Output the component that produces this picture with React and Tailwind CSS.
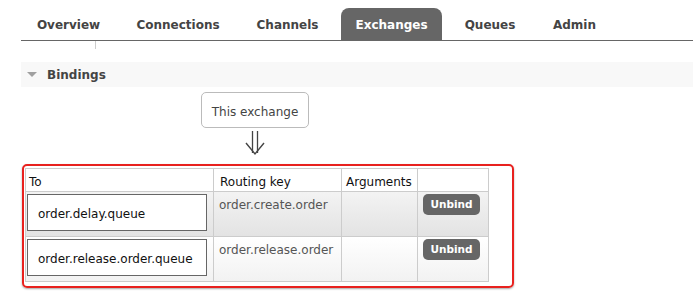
export default function App() {
  const font = { fontFamily: '"DejaVu Sans", Verdana, sans-serif' };
  const tabs = [
    { label: "Overview", w: "w-[91px]" },
    { label: "Connections", w: "w-[112px]" },
    { label: "Channels", w: "w-[91px]" },
    { label: "Exchanges", w: "w-[101px]", active: true },
    { label: "Queues", w: "w-[80px]" },
    { label: "Admin", w: "w-[73px]" },
  ];
  const rows = [
    { q: "order.delay.queue", k: "order.create.order", bg: "bg-gradient-to-b from-[#f3f3f3] to-[#e3e3e3]" },
    { q: "order.release.order.queue", k: "order.release.order", bg: "bg-gradient-to-b from-[#ffffff] to-[#f2f2f2]" },
  ];
  return (
    <div className="w-[693px] h-[303px] bg-white overflow-hidden" style={font}>
      <div className="pt-[8px] ml-[21px]">
        <div className="flex gap-[8px] pl-[2px] border-b border-[#666] h-[33px]">
          {tabs.map((t) => (
            <div
              key={t.label}
              className={`${t.w} h-[32px] pt-[2px] flex items-center justify-center text-[12px] font-bold ${
                t.active ? "bg-[#666] text-white rounded-t-[8px]" : "text-[#444]"
              }`}
            >
              {t.label}
            </div>
          ))}
        </div>
        <div className="ml-[74px] w-px h-[8px] bg-[#ccc]" />
        <div className="mt-[13px] h-[25px] bg-[#f8f8f8] flex items-center">
          <svg width="10" height="5" viewBox="0 0 10 5" className="ml-[6px]">
            <polygon points="0,0 10,0 5,5" fill="#a0a0a0" />
          </svg>
          <span className="ml-[10px] text-[12px] font-bold text-[#444]">Bindings</span>
        </div>
        <div className="ml-[180px] mt-[5px] w-[108px] h-[36px] pt-[3px] border border-[#bbb] rounded-[5px] flex items-center justify-center text-[12px] text-[#444]">
          This exchange
        </div>
        <svg width="22" height="26" viewBox="0 0 22 26" className="ml-[224px] mt-[3px]">
          <line x1="7.5" y1="0" x2="7.5" y2="22" stroke="#444" strokeWidth="1.3" />
          <line x1="12.5" y1="0" x2="12.5" y2="22" stroke="#444" strokeWidth="1.3" />
          <polyline points="1,12 10,23 19,12" fill="none" stroke="#444" strokeWidth="1.4" />
        </svg>
        <div className="ml-[1px] mt-[7px] w-[492px] h-[124px] border-2 border-[#e8211e] rounded-[5px] shadow-[0_1px_2px_rgba(0,0,0,0.35)] pl-[1px] pt-[2px]">
          <div className="grid grid-cols-[188px_128px_76px_71px] border-l border-t border-[#ccc] text-[12px] w-[464px]">
            <div className="h-[23px] pt-[3px] border-r border-b border-[#ccc] pl-[3px] flex items-center text-[#111]">To</div>
            <div className="h-[23px] pt-[3px] border-r border-b border-[#ccc] pl-[6px] flex items-center text-[#111]">Routing key</div>
            <div className="h-[23px] pt-[3px] border-r border-b border-[#ccc] pl-[4px] flex items-center text-[#111]">Arguments</div>
            <div className="h-[23px] border-r border-b border-[#ccc]" />
            {rows.map((r) => (
              <div key={r.q} className="contents">
                <div className={`h-[45px] border-r border-b border-[#ccc] ${r.bg} pl-[1px] pt-[2px]`}>
                  <div className="w-[180px] h-[37px] pt-[2px] border border-[#666] bg-white flex items-center pl-[10px] text-[#111]">
                    {r.q}
                  </div>
                </div>
                <div className={`h-[45px] border-r border-b border-[#ccc] ${r.bg} pl-[5px] pt-[4px] text-[#555]`}>
                  {r.k}
                </div>
                <div className={`h-[45px] border-r border-b border-[#ccc] ${r.bg}`} />
                <div className={`h-[45px] border-r border-b border-[#ccc] ${r.bg} pl-[5px] pt-[2px]`}>
                  <div className="w-[57px] h-[21px] bg-[#666] rounded-[5px] flex items-center justify-center text-white text-[10.5px] font-bold">
                    Unbind
                  </div>
                </div>
              </div>
            ))}
          </div>
        </div>
      </div>
    </div>
  );
}
